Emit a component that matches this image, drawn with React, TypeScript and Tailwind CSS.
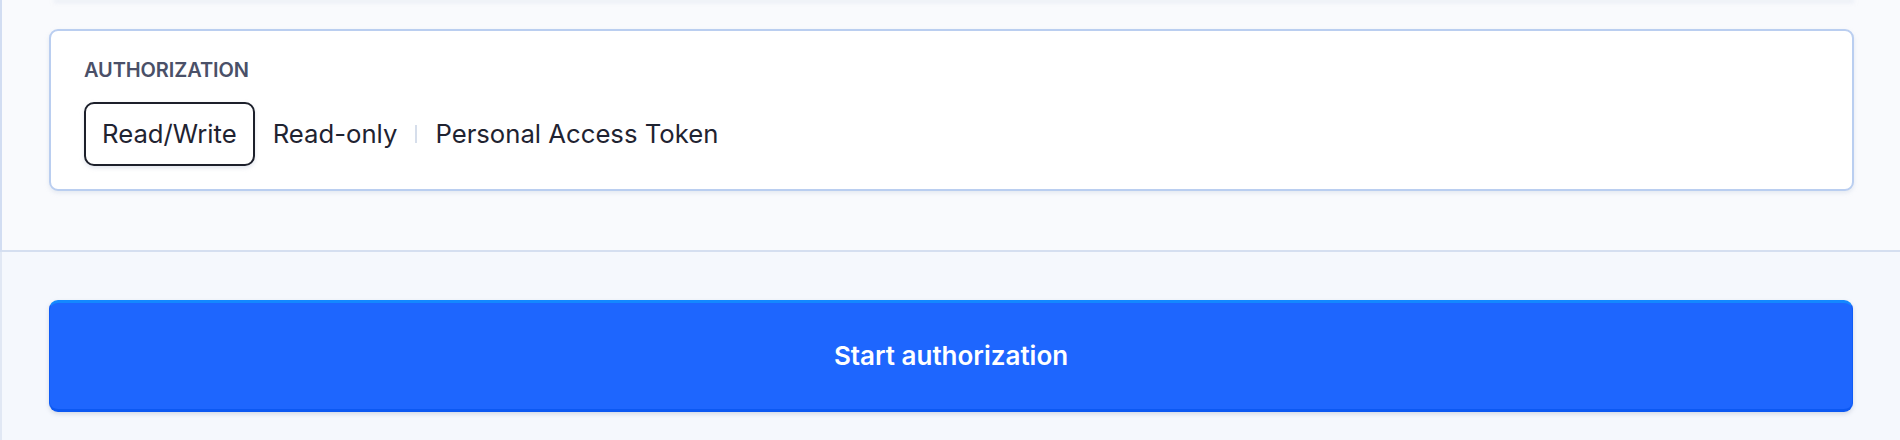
import React from "react";

const items = ["Read/Write", "Read-only", "Personal Access Token"];

export default function App() {
  const active = 0;
  return (
    <div className="w-[1900px] h-[440px] overflow-hidden bg-[#f5f8fd] font-['Inter',sans-serif]">
      <div className="h-[252px] bg-[#f9fafd] border-l-2 border-b-2 border-l-[#d2ddf2] border-b-[#d5dff0] flex flex-col">
        <div className="ml-[53px] mr-[47px] h-0 shadow-[0_1px_4px_1px_rgba(200,210,230,0.55)]" />
        <div className="mt-[29px] ml-[47px] mr-[46px] rounded-[9px] border-2 border-[#bacef0] bg-white pt-[26.5px] pb-[23px] px-[33px] shadow-[0_2px_4px_rgba(190,200,220,0.35)]">
          <div className="text-[20px] leading-[24px] font-semibold text-[#4a5068] tracking-[-0.1px]">
            AUTHORIZATION
          </div>
          <div className="mt-[20px] flex items-center">
            {items.map((label, i) => (
              <React.Fragment key={label}>
                {i > 0 && (
                  <div
                    className={
                      i === active || i - 1 === active
                        ? "w-0 h-4"
                        : "w-[2px] h-[18px] bg-[#d6deeb]"
                    }
                  />
                )}
                <div
                  className={
                    i === active
                      ? "h-[64px] flex items-center px-4 rounded-[10px] border-2 border-[#1d202b] bg-white text-[25.7px] leading-[30px] text-[#1f2331] shadow-[0_2px_4px_rgba(180,190,210,0.4)]"
                      : "h-[64px] flex items-center px-4 rounded-[10px] border-2 border-transparent text-[25.7px] leading-[30px] text-[#1f2331]"
                  }
                >
                  {label}
                </div>
              </React.Fragment>
            ))}
          </div>
        </div>
      </div>
      <div className="border-l-2 border-l-[#e1e8f4] h-[188px] pt-[48px] pl-[47px] pr-[47px]">
        <button className="w-full h-[112px] rounded-[9px] bg-[#1e66fe] border-t-[3px] border-t-[#1388ff] border-b-[3px] border-b-[#0c58f2] border-x-[1px] border-x-[#0f5cf6] text-white text-[26px] font-semibold leading-[30px] shadow-[0_2px_4px_rgba(170,180,200,0.45)]">
          Start authorization
        </button>
      </div>
    </div>
  );
}
